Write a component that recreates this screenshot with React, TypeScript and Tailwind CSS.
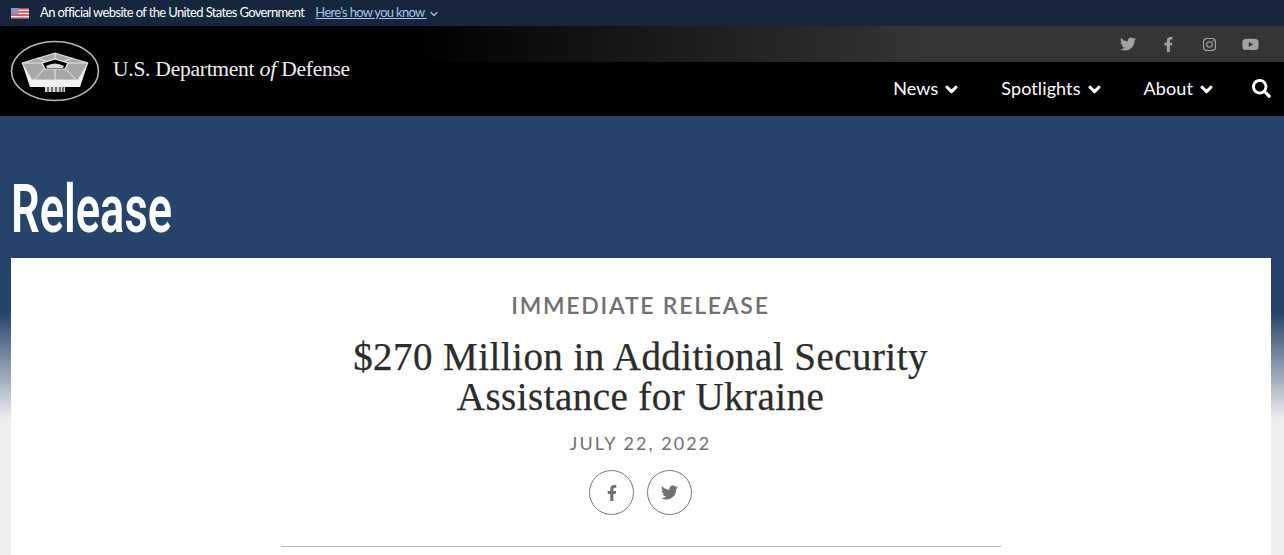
import { FaChevronDown, FaFacebookF, FaInstagram, FaSearch, FaTwitter, FaYoutube } from 'react-icons/fa';
import { LuChevronDown } from 'react-icons/lu';

const NAV_ITEMS = ['News', 'Spotlights', 'About'];

function Flag() {
  return (
    <svg width="18" height="11" viewBox="0 0 18 11" className="block">
      <rect width="18" height="11" fill="#f4f4f4" />
      <rect width="18" height="1.6" fill="#c8414b" />
      <rect y="3.1" width="18" height="1.6" fill="#c8414b" />
      <rect y="6.2" width="18" height="1.6" fill="#c8414b" />
      <rect y="9.4" width="18" height="1.6" fill="#c8414b" />
      <rect width="8" height="6" fill="#8f93c7" />
    </svg>
  );
}

function PentagonLogo() {
  return (
    <svg width="90" height="62" viewBox="0 0 90 62" className="block shrink-0">
      <ellipse cx="45" cy="31" rx="43.5" ry="29.5" fill="#000" stroke="#b8b8b8" strokeWidth="1.6" />
      <path d="M45 13 L78 23 L68 40 L22 40 L12 23 Z" fill="#a8a8a8" stroke="#e8e8e8" strokeWidth="1" />
      <path d="M12 23 L22 40 L68 40 L78 23 L70 47 L20 47 Z" fill="#f0f0f0" />
      <path d="M45 13 V20 M32 23 L12 23 M58 23 L78 23 M34 29 L24 40 M56 29 L66 40 M45 29 V40 M27 18 L38 22 M63 18 L52 22" stroke="#e8e8e8" strokeWidth="1" fill="none" />
      <path d="M45 19 L58 23 L55 29 L35 29 L32 23 Z" fill="#000" stroke="#eee" strokeWidth="1.2" />
      <path d="M36 26 Q45 21 54 26 L53 28 L37 28 Z" fill="#d8d8d8" />
      <rect x="35" y="47" width="20" height="5" fill="#d8d8d8" />
      <path d="M38 47 V52 M42 47 V52 M46 47 V52 M50 47 V52 M53 47 V52" stroke="#000" strokeWidth="1" />
    </svg>
  );
}

export default function App() {
  return (
    <div className="h-[555px] overflow-hidden bg-white font-['Lato',sans-serif]">
      <div className="flex h-[26px] items-center bg-[#15263d] pl-[11px] text-[13px] text-white">
        <Flag />
        <span className="ml-[11px] tracking-[-0.64px]">An official website of the United States Government</span>
        <span className="ml-[11px] tracking-[-0.7px] text-[#a9c2e6] underline">Here's how you know&nbsp;</span>
        <LuChevronDown className="ml-px mt-[2px] text-[#a9c2e6]" size={12} strokeWidth={2.5} />
      </div>

      <header className="relative h-[90px] bg-black">
        <div className="absolute inset-x-0 top-0 flex h-9 items-center justify-end bg-[linear-gradient(90deg,#000_32%,#353535_72%,#353535_100%)] pr-[13px] text-[#a2a2a2]">
          <span className="flex w-[41px] justify-center"><FaTwitter size={16} /></span>
          <span className="flex w-[41px] justify-center"><FaFacebookF size={15} /></span>
          <span className="flex w-[41px] justify-center"><FaInstagram size={15} /></span>
          <span className="flex w-[41px] justify-center"><FaYoutube size={17} /></span>
        </div>
        <div className="absolute left-0 top-0 flex h-full items-center pl-2.5">
          <PentagonLogo />
          <span className="mb-1 ml-[13px] font-['Liberation_Serif',serif] text-[21.5px] tracking-[-0.25px] text-[#efefef]">
            U.S. Department <em className="text-[22px]">of</em> Defense
          </span>
        </div>
        <nav className="absolute bottom-0 right-[13px] flex h-[54px] items-center gap-[43px] pb-[2px] text-lg tracking-[0.1px] text-white">
          {NAV_ITEMS.map((item) => (
            <span key={item} className="flex items-center">
              {item}
              <FaChevronDown className="ml-[7px] mt-[3px]" size={13} stroke="currentColor" strokeWidth={40} />
            </span>
          ))}
          <FaSearch className="-ml-1" size={19} />
        </nav>
      </header>

      <main className="bg-[linear-gradient(180deg,#26436a_196px,#efefef_304px)] pl-[11px] pr-[13px] pb-10">
        <div className="flex h-[142px] items-end pb-[15px]">
          <h1 className="origin-left scale-x-[0.685] font-['Roboto',sans-serif] text-[66px] leading-none font-semibold whitespace-nowrap text-white">
            Release
          </h1>
        </div>
        <section className="flex h-[400px] flex-col items-center bg-white pr-px pt-[33px] text-center">
          <p className="text-[23px] leading-7 font-semibold tracking-[1.75px] text-[#707070]">IMMEDIATE RELEASE</p>
          <h2 className="mt-[18px] font-['Liberation_Serif',serif] text-[39px] leading-10 font-normal tracking-[0.45px] text-[#2b2b2b] [-webkit-text-stroke:0.25px_#2b2b2b]">
            $270 Million in Additional Security
            <br />
            Assistance for Ukraine
          </h2>
          <p className="mt-[14px] text-lg leading-6 tracking-[2.05px] text-[#707070]">JULY 22, 2022</p>
          <div className="mt-[15px] flex gap-[13px] text-[#6f6f6f]">
            <span className="flex size-[45px] items-center justify-center rounded-full border border-[#777777]">
              <FaFacebookF size={16} />
            </span>
            <span className="flex size-[45px] items-center justify-center rounded-full border border-[#777777]">
              <FaTwitter size={17} />
            </span>
          </div>
          <hr className="ml-px mt-[31px] w-[720px] border-[#b9b9b9]" />
        </section>
      </main>
    </div>
  );
}
